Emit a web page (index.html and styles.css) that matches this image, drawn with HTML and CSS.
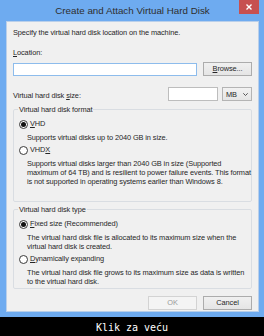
FILE: index.html
```html
<!DOCTYPE html>
<html lang="en">
  <head>
    <meta charset="UTF-8" />
    <meta name="viewport" content="width=device-width, initial-scale=1.0" />
    <title>Create and Attach Virtual Hard Disk</title>
    <link rel="stylesheet" href="styles.css">
  </head>
  <body>
    <div class="window">
      <div class="titlebar">
        <span></span>
        <div class="title">Create and Attach Virtual Hard Disk</div>
        <div class="close">
          <svg width="6" height="6" viewBox="0 0 6 6">
            <path d="M0.5 0.5 L5.5 5.5 M5.5 0.5 L0.5 5.5" stroke="#fff" stroke-width="1.4" />
          </svg>
        </div>
      </div>

      <div class="client">
        <p class="intro">Specify the virtual hard disk location on the machine.</p>

        <div class="field-label"><u>L</u>ocation:</div>
        <div class="location-row">
          <div class="textbox focused"></div>
          <div class="btn"><u>B</u>rowse...</div>
        </div>

        <div class="size-row">
          <div class="size-label">Virtual hard disk <u>s</u>ize:</div>
          <div class="textbox size-box"></div>
          <div class="combo">
            <span>MB</span>
            <svg width="5" height="3" viewBox="0 0 5 3">
              <path d="M0.3 0.3 L2.5 2.5 L4.7 0.3" fill="none" stroke="#444" stroke-width="0.9" />
            </svg>
          </div>
        </div>

        <!-- 格式 -->
        <fieldset class="group group-format">
          <legend>Virtual hard disk format</legend>
          <div class="option">
            <div class="radio checked"><span class="dot"></span><span><u>V</u>HD</span></div>
            <p class="desc">Supports virtual disks up to 2040 GB in size.</p>
          </div>
          <div class="option">
            <div class="radio"><span class="dot"></span><span>VHD<u>X</u></span></div>
            <p class="desc">
              Supports virtual disks larger than 2040 GB in size (Supported<br>
              maximum of 64 TB) and is resilient to power failure events. This format<br>
              is not supported in operating systems earlier than Windows 8.
            </p>
          </div>
        </fieldset>

        <!-- 類型 -->
        <fieldset class="group group-type">
          <legend>Virtual hard disk type</legend>
          <div class="option">
            <div class="radio checked"><span class="dot"></span><span><u>F</u>ixed size (Recommended)</span></div>
            <p class="desc">
              The virtual hard disk file is allocated to its maximum size when the<br>
              virtual hard disk is created.
            </p>
          </div>
          <div class="option">
            <div class="radio"><span class="dot"></span><span><u>D</u>ynamically expanding</span></div>
            <p class="desc">
              The virtual hard disk file grows to its maximum size as data is written<br>
              to the virtual hard disk.
            </p>
          </div>
        </fieldset>

        <div class="actions">
          <div class="btn disabled">OK</div>
          <div class="btn">Cancel</div>
        </div>
      </div>
    </div>
    <div class="caption">Klik za veću</div>
  </body>
</html>
```

FILE: styles.css
```css
body {
  margin: 0;
  background-color: #000;
  font-family: "Liberation Sans", Arial, sans-serif;
  font-size: 7.4px;
  letter-spacing: -0.1px;
  color: #262626;
}

u {
  text-decoration-thickness: 1px;
  text-underline-offset: 1px;
}

/* ===== 視窗外框 ===== */
.window {
  background-color: #6eabf0;
  padding: 0 5px 5px 6px;
}

.titlebar {
  display: grid;
  grid-template-columns: 1fr auto 1fr;
  height: 21px;
}

.title {
  font-size: 9.8px;
  letter-spacing: normal;
  line-height: 22px;
  color: #2e2e2e;
  white-space: nowrap;
}

.close {
  justify-self: end;
  width: 20px;
  height: 14px;
  background-color: #c75050;
  display: flex;
  align-items: center;
  justify-content: center;
}

.client {
  box-sizing: border-box;
  height: 291px;
  background-color: #f0f0f0;
  border: 1px solid #b9cfea;
  padding: 6px 6px 0;
}

.intro {
  margin: 0;
  line-height: 9px;
  white-space: nowrap;
}

.field-label {
  margin-top: 11px;
  line-height: 9px;
}

/* ===== 輸入列 ===== */
.location-row {
  display: flex;
  align-items: center;
  gap: 6px;
  margin-top: 5px;
}

.textbox {
  box-sizing: border-box;
  height: 13px;
  background-color: #fff;
  border: 1px solid #bdbdbd;
}

.textbox.focused {
  width: 184px;
  border-color: #8dbcec;
}

.size-row {
  display: flex;
  align-items: center;
  margin-top: 11px;
}

.size-label {
  flex: 1;
  line-height: 9px;
  padding-top: 2px;
}

.size-box {
  width: 50px;
  height: 14px;
  margin-right: 4px;
}

.combo {
  box-sizing: border-box;
  width: 30px;
  height: 14px;
  display: flex;
  align-items: center;
  justify-content: space-between;
  padding: 0 3px 0 3px;
  border: 1px solid #b4b4b4;
  background: linear-gradient(#f2f2f2, #e5e5e5);
}

.btn {
  box-sizing: border-box;
  width: 49px;
  height: 14px;
  line-height: 12px;
  text-align: center;
  border: 1px solid #acacac;
  background: linear-gradient(#f0f0f0, #e5e5e5);
}

.btn.disabled {
  color: #9a9a9a;
  border-color: #d3d3d3;
  background: #f4f4f4;
}

/* ===== 群組框 ===== */
.group {
  margin: 4px 0 0;
  padding: 5px 5px 15px;
  border: 1px solid #d9dde2;
  border-radius: 2px;
  min-width: 0;
}

.group-type {
  margin-top: 3px;
  padding-bottom: 2px;
}

.group legend {
  padding: 0 1px;
  margin-left: -1px;
  line-height: 9px;
}

.option + .option {
  margin-top: 3px;
}

.radio {
  display: flex;
  align-items: center;
  gap: 2px;
  line-height: 10px;
}

.radio .dot {
  box-sizing: border-box;
  width: 9px;
  height: 9px;
  border: 1px solid #3a3a3a;
  border-radius: 50%;
  background-color: #fff;
  display: flex;
  align-items: center;
  justify-content: center;
}

.radio.checked .dot::after {
  content: "";
  width: 5px;
  height: 5px;
  border-radius: 50%;
  background-color: #111;
}

.desc {
  margin: 4px 0 0 8px;
  line-height: 9px;
  white-space: nowrap;
}

.actions {
  display: flex;
  justify-content: flex-end;
  gap: 6px;
  margin-top: 7px;
}

/* ===== 下方說明文字 ===== */
.caption {
  height: 19px;
  line-height: 21px;
  text-align: center;
  color: #fff;
  font-family: "DejaVu Sans Mono", monospace;
  font-size: 10px;
  letter-spacing: normal;
}
```
